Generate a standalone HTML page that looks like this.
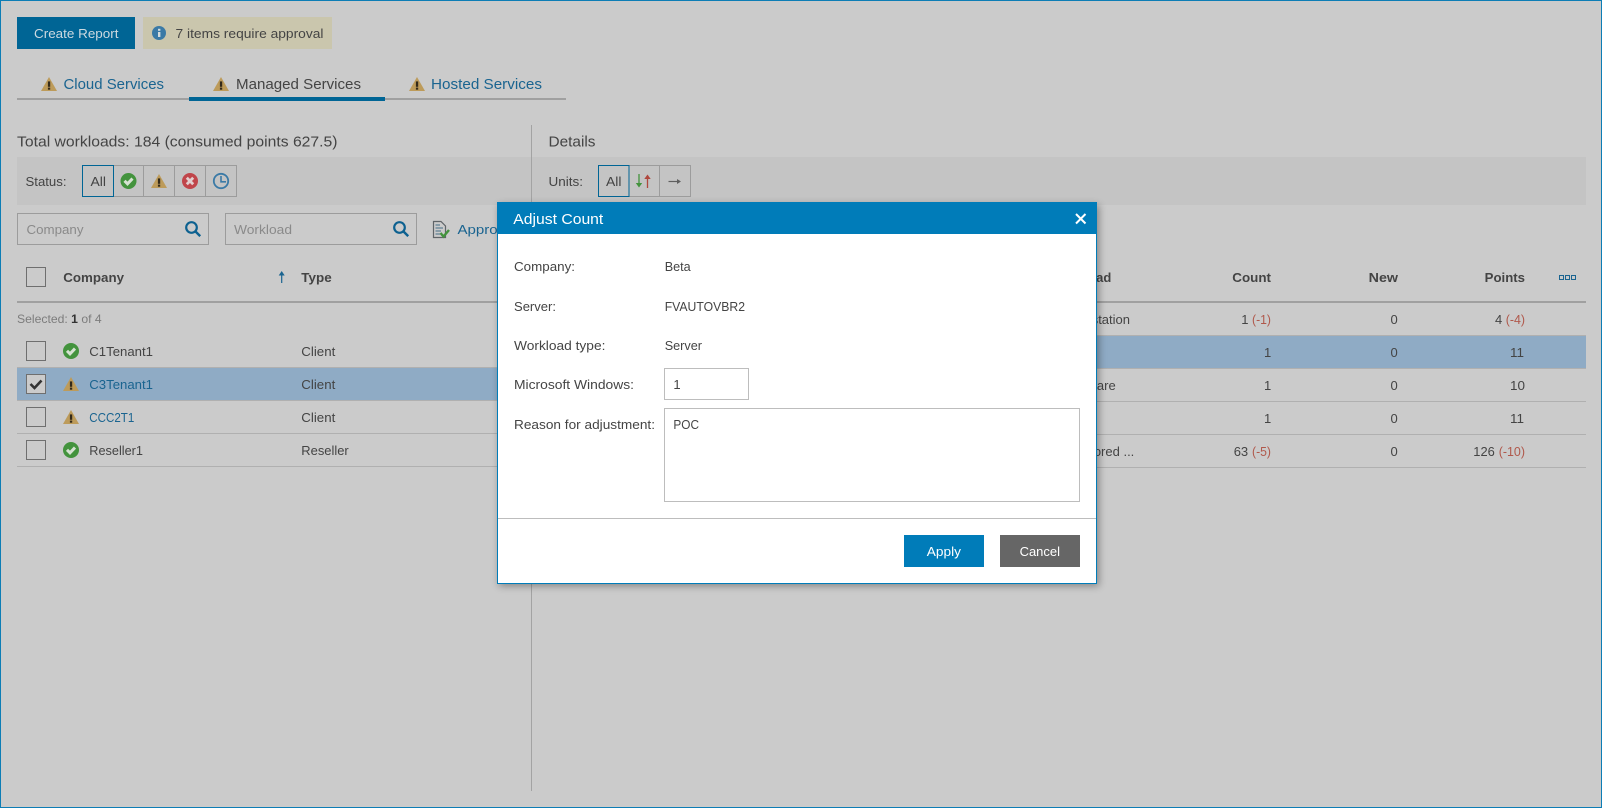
<!DOCTYPE html>
<html><head><meta charset="utf-8"><title>Adjust Count</title>
<style>
html,body{margin:0;padding:0;background:#cbcbcb;width:1602px;height:808px;overflow:hidden}
svg{display:block}
text{font-family:"Liberation Sans",sans-serif;font-size:13px;fill:#444;white-space:pre}
.l{fill:#1a6490}.b{font-weight:bold}.t{font-size:15px}.g{fill:#8a8a8a}.r{fill:#b0584b}.w{fill:#fff}.s{font-size:12px}
</style></head><body>
<svg width="1602" height="808" viewBox="0 0 1602 808" xmlns="http://www.w3.org/2000/svg">
<defs>
<symbol id="warn" viewBox="0 0 16 14" overflow="visible"><path d="M8 0L16 14H0Z" fill="#bd9b5a"/><rect x="6.900" y="4.400" width="2.300" height="5.400" fill="#332a1a"/><rect x="6.900" y="10.600" width="2.300" height="2.100" fill="#332a1a"/></symbol>
<symbol id="ok" viewBox="0 0 16 16"><circle cx="8" cy="8" r="8" fill="#43933d"/><path d="M4 7.800L7 10.800L12 5.600" fill="none" stroke="#d6e2d2" stroke-width="3"/></symbol>
<symbol id="srch" viewBox="0 0 16 16"><circle cx="6.500" cy="6.500" r="5.300" fill="none" stroke="#0d6190" stroke-width="2.200"/><path d="M10.400 10.400L15.200 15.200" stroke="#0d6190" stroke-width="2.400"/></symbol>
<filter id="sh" x="-5%" y="-5%" width="110%" height="112%"><feGaussianBlur stdDeviation="4"/></filter>
</defs>

<rect width="1602" height="808" fill="#cbcbcb"/>
<rect x=".5" y=".5" width="1601" height="807" fill="none" stroke="#0d7db5"/>

<!-- top bar -->
<rect x="17" y="17" width="118" height="32" fill="#006595"/>
<text x="34" y="38" class="w" style="fill:#ccd9e0" textLength="84.500" lengthAdjust="spacingAndGlyphs">Create Report</text>
<rect x="143" y="17" width="189" height="32" fill="#cac6ad"/>
<circle cx="159" cy="33" r="7" fill="#3b7aa6"/><rect x="158" y="32" width="2.400" height="5" fill="#d4dbdc"/><rect x="158" y="28.800" width="2.400" height="2" fill="#d4dbdc"/>
<text x="175.500" y="38" textLength="148" lengthAdjust="spacingAndGlyphs">7 items require approval</text>

<!-- tabs -->
<rect x="17" y="98" width="549" height="2" fill="#a0a0a0"/>
<rect x="189" y="97" width="196" height="4" fill="#006595"/>
<use href="#warn" x="41" y="77" width="16" height="14"/>
<text x="63.500" y="89" class="t l" textLength="100.500" lengthAdjust="spacingAndGlyphs">Cloud Services</text>
<use href="#warn" x="213" y="77" width="16" height="14"/>
<text x="236" y="89" class="t" textLength="125" lengthAdjust="spacingAndGlyphs">Managed Services</text>
<use href="#warn" x="409" y="77" width="16" height="14"/>
<text x="431" y="89" class="t l" textLength="111" lengthAdjust="spacingAndGlyphs">Hosted Services</text>

<!-- split -->
<rect x="17" y="157" width="1569" height="48" fill="#c4c4c4"/>
<rect x="531" y="125" width="1" height="666" fill="#a3a3a3"/>
<text x="17" y="146.500" class="t" textLength="320.500" lengthAdjust="spacingAndGlyphs">Total workloads: 184 (consumed points 627.5)</text>
<text x="548.500" y="146.500" class="t" textLength="47" lengthAdjust="spacingAndGlyphs">Details</text>

<!-- status filter -->
<text x="25.500" y="186" textLength="41" lengthAdjust="spacingAndGlyphs">Status:</text>
<g fill="none" stroke="#9c9c9c">
<rect x="82.500" y="165.500" width="154" height="31"/>
<path d="M143.500 166V196M174.500 166V196M205.500 166V196"/>
</g>
<rect x="82.500" y="165.500" width="31" height="31" fill="#c4c4c4" stroke="#006595"/>
<text x="90.500" y="186" textLength="15.500" lengthAdjust="spacingAndGlyphs">All</text>
<use href="#ok" x="120.500" y="173" width="16" height="16"/>
<use href="#warn" x="151" y="174" width="16" height="14"/>
<circle cx="190" cy="181" r="8" fill="#c0454a"/><path d="M186.800 177.800L193.200 184.200M193.200 177.800L186.800 184.200" stroke="#e2cfcf" stroke-width="2.800"/>
<circle cx="221" cy="181" r="7.200" fill="none" stroke="#3b7aa6" stroke-width="1.800"/><path d="M221 176V181.800H226" fill="none" stroke="#3b7aa6" stroke-width="1.600"/>

<!-- units filter -->
<text x="548.500" y="186" textLength="34.500" lengthAdjust="spacingAndGlyphs">Units:</text>
<g fill="none" stroke="#9c9c9c">
<rect x="598.500" y="165.500" width="92" height="31"/>
<path d="M659.500 166V196"/>
</g>
<rect x="598.500" y="165.500" width="30.500" height="31" fill="#c4c4c4" stroke="#006595"/>
<text x="606" y="186" textLength="15.500" lengthAdjust="spacingAndGlyphs">All</text>
<path d="M639 174V186" stroke="#43933d" stroke-width="1.300"/><path d="M635.800 183H642.200L639 187.500Z" fill="#43933d"/>
<path d="M647.500 176V188" stroke="#b0473e" stroke-width="1.300"/><path d="M644.300 179H650.700L647.500 174.500Z" fill="#b0473e"/>
<path d="M668.500 181.500H678" stroke="#5f5f5f" stroke-width="1.200"/><path d="M677 179L681 181.500L677 184Z" fill="#5f5f5f"/>

<!-- search inputs -->
<rect x="17.500" y="213.500" width="191" height="31" fill="none" stroke="#9c9c9c"/>
<text x="26.500" y="234" class="g" textLength="57" lengthAdjust="spacingAndGlyphs">Company</text>
<use href="#srch" x="185" y="221" width="16" height="16"/>
<rect x="225.500" y="213.500" width="191" height="31" fill="none" stroke="#9c9c9c"/>
<text x="234" y="234" class="g" textLength="58" lengthAdjust="spacingAndGlyphs">Workload</text>
<use href="#srch" x="393" y="221" width="16" height="16"/>
<path d="M433.500 221.500H441L445.500 226V237.500H433.500Z" fill="none" stroke="#5f6468" stroke-width="1.200"/>
<path d="M435.500 225H440M435.500 228H443M435.500 231H441M435.500 234H440" stroke="#5f7f92" stroke-width="1.200"/>
<path d="M440.500 233L443.500 236.500L449 230" fill="none" stroke="#43933d" stroke-width="2.400"/>
<text x="457.500" y="234" class="l" textLength="56" lengthAdjust="spacingAndGlyphs">Approve</text>

<!-- left table -->
<rect x="26.500" y="267.500" width="19" height="19" fill="none" stroke="#6f6f6f"/>
<text x="63.300" y="282" class="b" textLength="60.700" lengthAdjust="spacingAndGlyphs">Company</text>
<path d="M281.700 273V283" stroke="#1a6490" stroke-width="1.200"/><path d="M278.700 275.500L281.700 271L284.700 275.500Z" fill="#1a6490"/>
<text x="301.300" y="282" class="b" textLength="30.400" lengthAdjust="spacingAndGlyphs">Type</text>
<rect x="17" y="301" width="514" height="2" fill="#a0a0a0"/>
<text x="17" y="323" class="s" style="fill:#7c7c7c" textLength="84.700" lengthAdjust="spacingAndGlyphs">Selected: <tspan class="b" style="fill:#333">1</tspan> of 4</text>

<rect x="17" y="368" width="514" height="32" fill="#8fabc5"/>
<g fill="#b0b0b0">
<rect x="17" y="367" width="514" height="1"/><rect x="17" y="400" width="514" height="1"/><rect x="17" y="433" width="514" height="1"/><rect x="17" y="466" width="514" height="1"/>
</g>
<g fill="none" stroke="#6f6f6f">
<rect x="26.500" y="341.500" width="19" height="19"/>
<rect x="26.500" y="374.500" width="19" height="19" fill="#cbcbcb"/>
<rect x="26.500" y="407.500" width="19" height="19"/>
<rect x="26.500" y="440.500" width="19" height="19"/>
</g>
<path d="M30.500 384L34.500 388L41.500 380.500" fill="none" stroke="#333" stroke-width="2.600"/>
<use href="#ok" x="63" y="343" width="16" height="16"/>
<use href="#warn" x="63" y="377" width="16" height="14"/>
<use href="#warn" x="63" y="410" width="16" height="14"/>
<use href="#ok" x="63" y="442" width="16" height="16"/>
<text x="89.300" y="356" textLength="63.700" lengthAdjust="spacingAndGlyphs">C1Tenant1</text>
<text x="89.300" y="389" class="l" textLength="63.700" lengthAdjust="spacingAndGlyphs">C3Tenant1</text>
<text x="89.300" y="422" class="l" textLength="45" lengthAdjust="spacingAndGlyphs">CCC2T1</text>
<text x="89.300" y="455" textLength="53.700" lengthAdjust="spacingAndGlyphs">Reseller1</text>
<text x="301.300" y="356" textLength="34" lengthAdjust="spacingAndGlyphs">Client</text>
<text x="301.300" y="389" textLength="34" lengthAdjust="spacingAndGlyphs">Client</text>
<text x="301.300" y="422" textLength="34" lengthAdjust="spacingAndGlyphs">Client</text>
<text x="301.300" y="455" textLength="47.400" lengthAdjust="spacingAndGlyphs">Reseller</text>

<!-- right table -->
<rect x="1000" y="301" width="586" height="2" fill="#a0a0a0"/>
<rect x="1000" y="336" width="586" height="32" fill="#8fabc5"/>
<g fill="#b0b0b0">
<rect x="1000" y="335" width="586" height="1"/><rect x="1000" y="368" width="586" height="1"/><rect x="1000" y="401" width="586" height="1"/><rect x="1000" y="434" width="586" height="1"/><rect x="1000" y="467" width="586" height="1"/>
</g>
<text x="1111.300" y="282" class="b" text-anchor="end">Workload</text>
<text x="1232.300" y="282" class="b" textLength="38.700" lengthAdjust="spacingAndGlyphs">Count</text>
<text x="1368.700" y="282" class="b" textLength="29.300" lengthAdjust="spacingAndGlyphs">New</text>
<text x="1484.700" y="282" class="b" textLength="40.300" lengthAdjust="spacingAndGlyphs">Points</text>
<g fill="none" stroke="#1a6490"><rect x="1559.500" y="275.500" width="4" height="4"/><rect x="1565.500" y="275.500" width="4" height="4"/><rect x="1571.500" y="275.500" width="4" height="4"/></g>

<text x="1130" y="324" text-anchor="end">Workstation</text>
<text x="1115.700" y="390" text-anchor="end">Software</text>
<text x="1134.300" y="456" text-anchor="end">Monitored ...</text>

<g>
<text x="1241.300" y="324">1</text><text x="1252" y="324" class="r" textLength="19" lengthAdjust="spacingAndGlyphs">(-1)</text>
<text x="1264" y="357">1</text><text x="1264" y="390">1</text><text x="1264" y="423">1</text>
<text x="1233.700" y="456" textLength="14.500" lengthAdjust="spacingAndGlyphs">63</text><text x="1252" y="456" class="r" textLength="19" lengthAdjust="spacingAndGlyphs">(-5)</text>
<text x="1390.500" y="324">0</text><text x="1390.500" y="357">0</text><text x="1390.500" y="390">0</text><text x="1390.500" y="423">0</text><text x="1390.500" y="456">0</text>
<text x="1495" y="324">4</text><text x="1505.700" y="324" class="r" textLength="19.300" lengthAdjust="spacingAndGlyphs">(-4)</text>
<text x="1510" y="357" textLength="14" lengthAdjust="spacingAndGlyphs">11</text>
<text x="1510" y="390" textLength="15" lengthAdjust="spacingAndGlyphs">10</text>
<text x="1510" y="423" textLength="14" lengthAdjust="spacingAndGlyphs">11</text>
<text x="1473.300" y="456" textLength="21.500" lengthAdjust="spacingAndGlyphs">126</text><text x="1498.700" y="456" class="r" textLength="26.300" lengthAdjust="spacingAndGlyphs">(-10)</text>
</g>

<!-- dialog -->
<rect x="499" y="205" width="600" height="381" fill="#000" opacity=".35" filter="url(#sh)"/>
<rect x="497.500" y="202.500" width="599" height="381" fill="#fff" stroke="#007cb9"/>
<rect x="497" y="202" width="600" height="32" fill="#007cb9"/>
<text x="513.300" y="224" class="t w" textLength="90" lengthAdjust="spacingAndGlyphs">Adjust Count</text>
<path d="M1076 214L1085.500 223.500M1085.500 214L1076 223.500" stroke="#fff" stroke-width="2"/>

<text x="514" y="271" textLength="61" lengthAdjust="spacingAndGlyphs">Company:</text>
<text x="664.700" y="271" textLength="26" lengthAdjust="spacingAndGlyphs">Beta</text>
<text x="514" y="311" textLength="42" lengthAdjust="spacingAndGlyphs">Server:</text>
<text x="664.700" y="311" textLength="80.300" lengthAdjust="spacingAndGlyphs">FVAUTOVBR2</text>
<text x="514" y="350" textLength="91.400" lengthAdjust="spacingAndGlyphs">Workload type:</text>
<text x="664.700" y="350" textLength="37.300" lengthAdjust="spacingAndGlyphs">Server</text>
<text x="514" y="389" textLength="120" lengthAdjust="spacingAndGlyphs">Microsoft Windows:</text>
<rect x="664.500" y="368.500" width="84" height="31" fill="#fff" stroke="#bdbdbd"/>
<text x="673.400" y="389">1</text>
<text x="514" y="429" textLength="141" lengthAdjust="spacingAndGlyphs">Reason for adjustment:</text>
<rect x="664.500" y="408.500" width="415" height="93" fill="#fff" stroke="#bdbdbd"/>
<text x="673.400" y="429" textLength="25.600" lengthAdjust="spacingAndGlyphs">POC</text>
<rect x="498" y="518" width="598" height="1" fill="#bdbdbd"/>
<rect x="904" y="535" width="80" height="32" fill="#007cb9"/>
<text x="926.800" y="556" class="w" textLength="34.200" lengthAdjust="spacingAndGlyphs">Apply</text>
<rect x="1000" y="535" width="80" height="32" fill="#666"/>
<text x="1019.600" y="556" class="w" textLength="40.400" lengthAdjust="spacingAndGlyphs">Cancel</text>
</svg>
</body></html>
